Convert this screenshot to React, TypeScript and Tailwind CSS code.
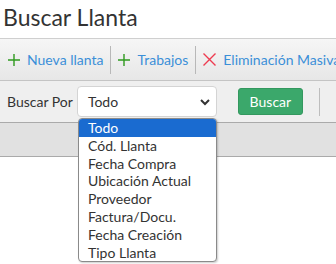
import { ReactNode } from 'react';

const options = [
  'Todo',
  'Cód. Llanta',
  'Fecha Compra',
  'Ubicación Actual',
  'Proveedor',
  'Factura/Docu.',
  'Fecha Creación',
  'Tipo Llanta',
];

const PlusIcon = () => (
  <svg width="12" height="12" viewBox="0 0 12 12" className="shrink-0">
    <path d="M6 0v12M0 6h12" stroke="#2f9a1f" strokeWidth="1.4" />
  </svg>
);

const CrossIcon = () => (
  <svg width="13" height="13" viewBox="0 0 13 13" className="shrink-0">
    <path d="M0.5 0.5l12 12M12.5 0.5l-12 12" stroke="#ee3b4f" strokeWidth="1.4" />
  </svg>
);

const ToolItem = ({ icon, label }: { icon: ReactNode; label: string }) => (
  <div className="flex items-center gap-[7px] px-[7px] text-[14px] text-[#3b8fd8] whitespace-nowrap">
    {icon}
    <span>{label}</span>
  </div>
);

const Divider = () => <div className="w-px h-[28px] bg-[#b8b8b8] shrink-0" />;

export default function App() {
  return (
    <div
      className="relative w-[336px] h-[264px] overflow-hidden bg-white"
      style={{ fontFamily: 'Lato, "Open Sans", sans-serif' }}
    >
      <h1 className="h-[38px] pl-[3px] pt-[3px] text-[23px] leading-[28px] text-[#333]">
        Buscar Llanta
      </h1>

      <div className="h-[42px] border-t border-[#cfcfcf] bg-gradient-to-b from-[#f6f6f6] to-[#e7e7e7] flex items-center pl-[1px]">
        <ToolItem icon={<PlusIcon />} label="Nueva llanta" />
        <Divider />
        <ToolItem icon={<PlusIcon />} label="Trabajos" />
        <Divider />
        <ToolItem icon={<CrossIcon />} label="Eliminación Masiva" />
      </div>

      <div className="relative h-[42px] border-t border-[#c4c4c4] bg-[#efefef] flex items-center pl-[7px]">
        <span className="text-[14px] text-[#333] mr-[4px]">Buscar Por</span>
        <div className="w-[140px] h-[31px] bg-white border border-[#d4d4d4] rounded-[4px] flex items-center justify-between pl-[10px] pr-[5px] text-[14px] text-[#333]">
          <span>Todo</span>
          <svg width="12" height="12" viewBox="0 0 12 12">
            <path d="M2 4l4 4 4-4" fill="none" stroke="#333" strokeWidth="2" />
          </svg>
        </div>
        <button className="ml-[21px] w-[65px] h-[27px] rounded-[3px] bg-[#3ba86b] border border-[#34985f] text-white text-[14px]">
          Buscar
        </button>
        <div className="ml-[16px] w-px h-[28px] bg-[#bdbdbd]" />
      </div>

      <div className="h-[35px] border-t border-[#aaa] border-b bg-[#e1e1e1]" />

      <ul className="absolute left-[78px] top-[118px] w-[139px] bg-white border border-[#8a8a8a] rounded-[4px] overflow-hidden text-[14px] leading-[17.8px] text-[#333] shadow-[1px_1px_2px_rgba(0,0,0,0.2)]">
        {options.map((o, i) => (
          <li
            key={o}
            className={`pl-[9px] whitespace-nowrap ${i === 0 ? 'bg-[#1a6bd0] text-white' : ''}`}
          >
            {o}
          </li>
        ))}
      </ul>
    </div>
  );
}
